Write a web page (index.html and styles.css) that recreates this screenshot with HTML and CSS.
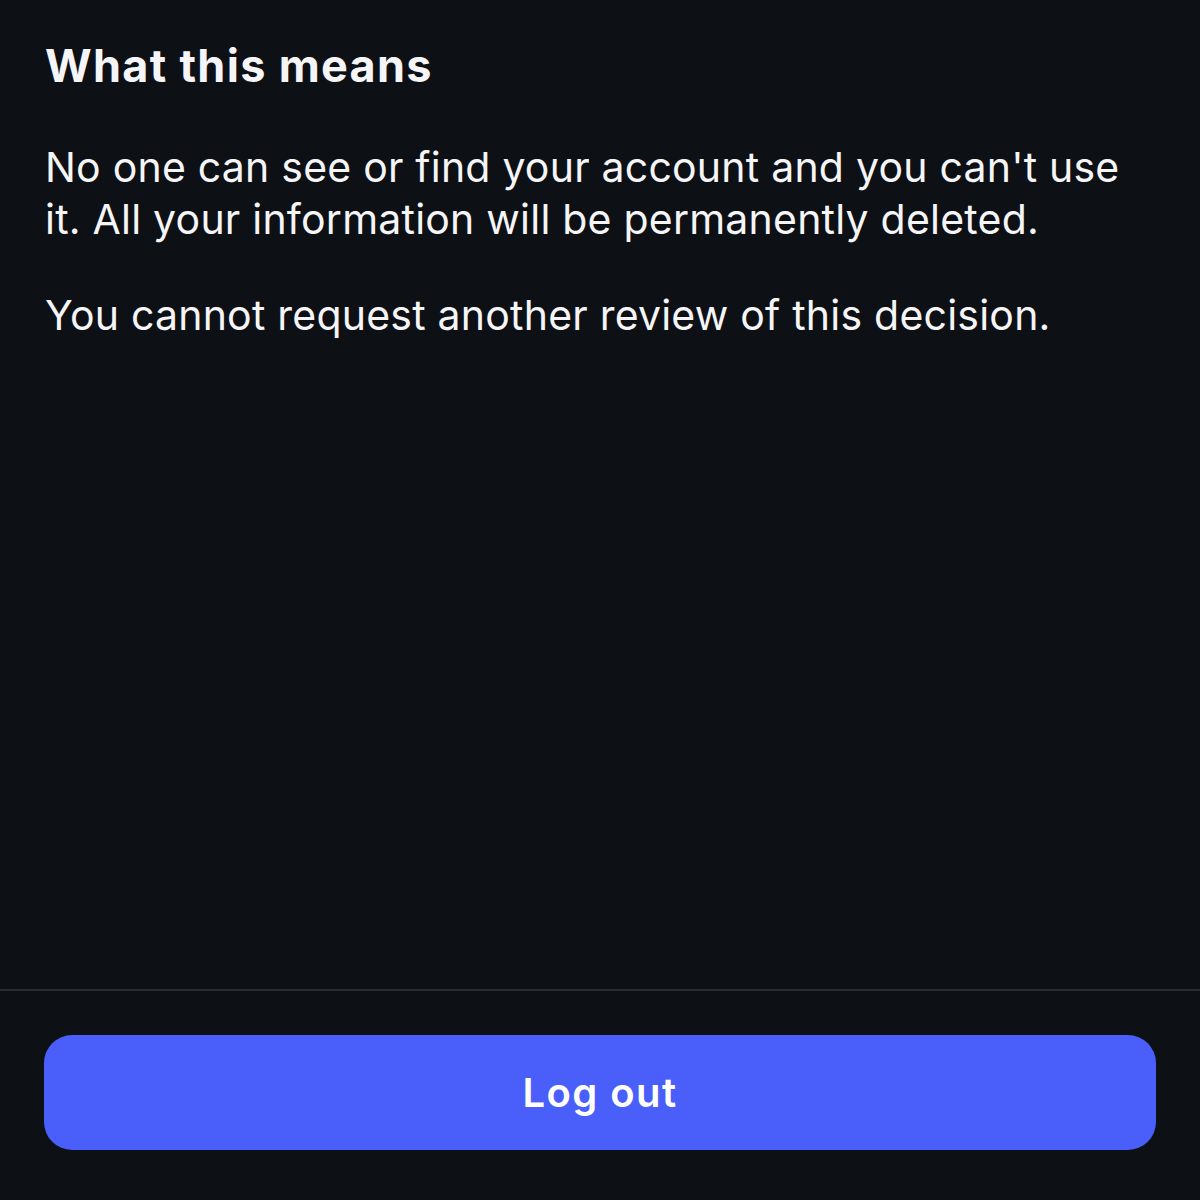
FILE: index.html
```html
<!DOCTYPE html>
<html lang="en">
<head>
<meta charset="utf-8">
<link rel="stylesheet" href="styles.css">
</head>
<body>
<div class="screen">
  <main class="content">
    <h1 class="title">What this means</h1>
    <p class="text">No one can see or find your account and you can't use it. All your information will be permanently deleted.</p>
    <p class="text">You cannot request another review of this decision.</p>
  </main>
  <footer class="footer">
    <button class="btn">Log out</button>
  </footer>
</div>
</body>
</html>
```
FILE: styles.css
```css
html, body {
  margin: 0;
  padding: 0;
  background: #0d1014;
}
.screen {
  height: 1200px;
  display: flex;
  flex-direction: column;
  font-family: Inter, "Noto Sans", sans-serif;
  color: #f5f5f7;
}
.content {
  flex: 1;
  padding: 38px 44px 0 45px;
}
.title {
  margin: 0;
  font-size: 45px;
  font-weight: 700;
  line-height: 56px;
  letter-spacing: 1.3px;
}
.text {
  margin: 44px 0 0 0;
  font-size: 41px;
  font-weight: 400;
  line-height: 52px;
  letter-spacing: 0.22px;
}
.title + .text {
  margin-top: 47px;
}
.footer {
  border-top: 2px solid #2a2d31;
  padding: 44px 44px 50px 44px;
}
.btn {
  display: block;
  width: 100%;
  height: 115px;
  border: none;
  border-radius: 28px;
  background: #4a5efa;
  color: #ffffff;
  font-family: Inter, "Noto Sans", sans-serif;
  font-size: 40px;
  font-weight: 600;
  letter-spacing: 1.4px;
}
```
